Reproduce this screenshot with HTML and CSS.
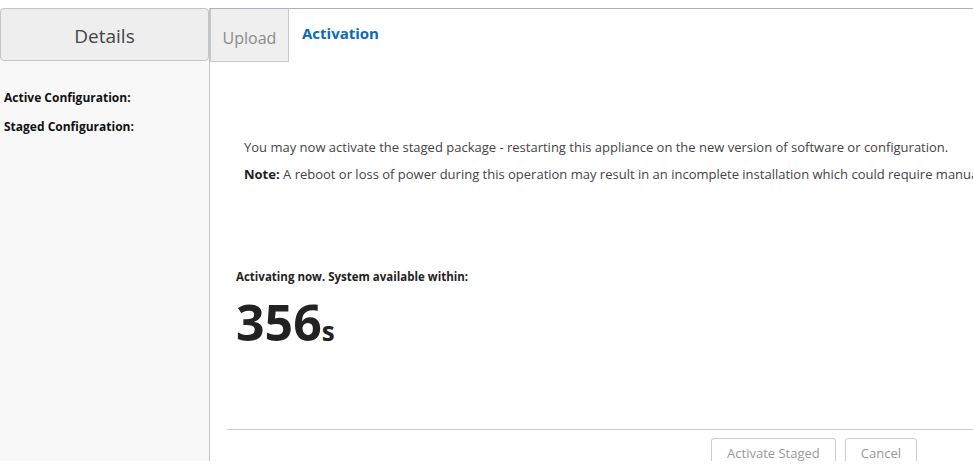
FILE: index.html
```html
<!DOCTYPE html>
<html>
<head>
<meta charset="utf-8">
<link rel="stylesheet" href="styles.css">
</head>
<body>
<div class="app">
  <aside class="sidebar">
    <div class="details-head">Details</div>
    <div class="details-body">
      <div class="label">Active Configuration:</div>
      <div class="label">Staged Configuration:</div>
    </div>
  </aside>
  <main class="main">
    <div class="tabs">
      <div class="tab tab-inactive">Upload</div>
      <div class="tab tab-active">Activation</div>
    </div>
    <div class="content">
      <p class="msg">You may now activate the staged package - restarting this appliance on the new version of software or configuration.</p>
      <p class="msg note"><b>Note:</b> A reboot or loss of power during this operation may result in an incomplete installation which could require manual recovery.</p>
      <div class="status">
        <div class="status-label">Activating now. System available within:</div>
        <div class="countdown"><span class="num">356</span><span class="unit">s</span></div>
      </div>
    </div>
    <div class="footer">
      <button class="btn">Activate Staged</button>
      <button class="btn">Cancel</button>
    </div>
  </main>
</div>
</body>
</html>
```
FILE: styles.css
```css
html, body {
  margin: 0;
  padding: 0;
  background: #fff;
}
body {
  padding-top: 8px;
  font-family: "Open Sans", "Noto Sans", sans-serif;
  color: #333;
}
.app {
  display: flex;
  height: 453px;
  overflow: hidden;
  width: 973px;
}
.sidebar {
  width: 209px;
  flex: none;
  display: flex;
  flex-direction: column;
  background: #f8f8f8;
  border-right: 1px solid #c2c6ca;
}
.details-head {
  height: 53px;
  box-sizing: border-box;
  border: 1px solid #c4c4c4;
  border-radius: 4px;
  background: #eeeeee;
  display: flex;
  align-items: center;
  justify-content: center;
  font-size: 19px;
  color: #444;
  padding-top: 3px;
}
.details-body {
  padding: 28px 4px 0;
}
.label {
  font-size: 12px;
  font-weight: bold;
  color: #111;
  line-height: 17px;
  margin-bottom: 12px;
}
.main {
  flex: 1;
  display: flex;
  flex-direction: column;
  min-width: 0;
}
.tabs {
  display: flex;
  border-top: 1px solid #a9b4c0;
  height: 52px;
  flex: none;
}
.tab {
  box-sizing: border-box;
  height: 53px;
  display: flex;
  align-items: center;
}
.tab-inactive {
  width: 79px;
  background: #efefef;
  border: 1px solid #c8c8c8;
  border-top: none;
  justify-content: center;
  font-size: 16px;
  color: #8a8a8a;
  padding-top: 5px;
}
.tab-active {
  padding-left: 13px;
  font-size: 15px;
  font-weight: bold;
  color: #0b6bb8;
  align-items: flex-start;
  padding-top: 14px;
}
.content {
  flex: 1;
  padding: 77px 0 0 34px;
  overflow: hidden;
}
.msg {
  margin: 0 0 9px;
  font-size: 13px;
  line-height: 18px;
  color: #444;
  white-space: nowrap;
}
.note b {
  color: #222;
}
.status {
  margin: 86px 0 0 -8px;
}
.status-label {
  font-size: 11.5px;
  font-weight: bold;
  color: #222;
}
.countdown {
  margin-top: 8px;
  color: #222;
  font-weight: bold;
  line-height: 60px;
}
.num {
  font-size: 50px;
}
.unit {
  font-size: 26px;
}
.footer {
  margin-left: 17px;
  border-top: 1px solid #cfcfcf;
  display: flex;
  justify-content: flex-end;
  gap: 9px;
  padding: 8px 56px 0 0;
  height: 23px;
  flex: none;
  overflow: hidden;
}
.btn {
  font-family: "Open Sans", "Noto Sans", sans-serif;
  font-size: 13px;
  color: #999;
  background: #fff;
  border: 1px solid #cccccc;
  border-radius: 3px;
  height: 30px;
  padding: 0 15px;
  flex: none;
}
```
